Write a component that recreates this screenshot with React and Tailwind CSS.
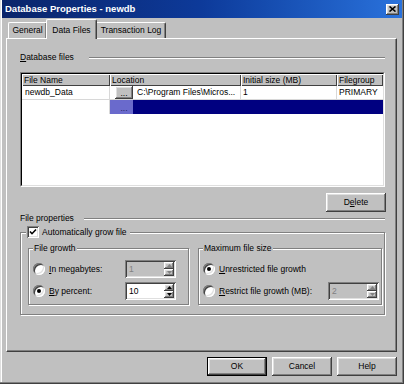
import React from 'react';

const raised =
  'bg-[#c0c0c0] shadow-[inset_-1px_-1px_0_#404040,inset_1px_1px_0_#fff,inset_-2px_-2px_0_#808080,inset_2px_2px_0_#dfdfdf]';
const sunken =
  'shadow-[inset_1px_1px_0_#808080,inset_-1px_-1px_0_#fff,inset_2px_2px_0_#404040,inset_-2px_-2px_0_#dfdfdf]';

function Radio({ checked }) {
  return (
    <span className="w-[12px] h-[12px] rounded-full bg-white shrink-0 flex items-center justify-center shadow-[inset_1px_1px_0_#808080,inset_-1px_-1px_0_#fff,inset_2px_2px_0_#404040,inset_-2px_-2px_0_#dfdfdf]">
      {checked && <span className="w-[4px] h-[4px] rounded-full bg-black" />}
    </span>
  );
}

function Spin({ value, disabled }) {
  return (
    <div className={`w-[51px] h-[18px] flex p-[2px] ${sunken} ${disabled ? 'bg-[#c0c0c0]' : 'bg-white'}`}>
      <div className={`flex-1 flex items-center pl-[2px] ${disabled ? 'text-[#808080]' : 'text-black'}`}>{value}</div>
      <div className="w-[10px] flex flex-col">
        <div className={`h-[7px] flex items-center justify-center ${raised}`}>
          <svg width="5" height="3" viewBox="0 0 5 3">
            <path d="M0 3 L2.5 0 L5 3 Z" fill={disabled ? '#808080' : '#000'} />
          </svg>
        </div>
        <div className={`flex-1 flex items-center justify-center ${raised}`}>
          <svg width="5" height="3" viewBox="0 0 5 3">
            <path d="M0 0 L2.5 3 L5 0 Z" fill={disabled ? '#808080' : '#000'} />
          </svg>
        </div>
      </div>
    </div>
  );
}

function Etched({ className = '' }) {
  return <div className={`flex-1 h-[2px] border-t border-t-[#808080] border-b border-b-white ${className}`} />;
}

export default function App() {
  return (
    <div className="w-[404px] h-[384px] bg-[#c0c0c0] text-black text-[8.5px] leading-none font-['Liberation_Sans',Arial,sans-serif] flex flex-col px-[2px] pb-[2px] overflow-hidden shadow-[inset_-1px_-1px_0_#404040,inset_-2px_-2px_0_#808080,inset_1px_0_0_#dfdfdf,inset_2px_0_0_#fff]">
      {/* title bar */}
      <div className="h-[18px] shrink-0 flex items-center justify-between pl-[3px] pr-[3px] bg-linear-to-r from-[#0a246a] via-[#0d3a9a] to-[#2a72dc]">
        <span className="text-white font-bold text-[9.5px]">Database Properties - newdb</span>
        <div className={`w-[13px] h-[11px] flex items-center justify-center ${raised}`}>
          <svg width="7" height="6" viewBox="0 0 7 6">
            <path d="M0.5 0.5 L6.5 5.5 M6.5 0.5 L0.5 5.5" stroke="#000" strokeWidth="1.6" />
          </svg>
        </div>
      </div>

      <div className="flex-1 flex flex-col pl-[4px] pr-[5px]">
        {/* tabs */}
        <div className="mt-[1px] h-[19px] flex items-end pl-[2px]">
          <div className="w-[38px] h-[16px] flex items-center justify-center border-l border-t border-white rounded-tl-[2px] shadow-[inset_-1px_0_0_#808080]">
            General
          </div>
          <div className="relative z-10 -mb-[1px] w-[51px] h-[20px] flex items-start pt-[6px] justify-center bg-[#c0c0c0] border-l border-t border-white border-r border-r-[#404040] rounded-t-[2px] shadow-[inset_-1px_0_0_#808080]">
            Data Files
          </div>
          <div className="w-[69px] h-[16px] flex items-center justify-center border-t border-white border-r border-r-[#404040] rounded-tr-[2px] shadow-[inset_-1px_0_0_#808080]">
            Transaction Log
          </div>
        </div>

        {/* tab panel */}
        <div className="h-[314px] shrink-0 flex flex-col pl-[13px] pr-[11px] border border-l-white border-t-white border-r-[#404040] border-b-[#404040] shadow-[inset_-1px_-1px_0_#808080]">
          <div className="mt-[12px] h-[13px] flex items-center">
            <span>
              <span className="underline">D</span>atabase files
            </span>
            <Etched className="ml-[15px]" />
          </div>

          {/* grid */}
          <div className="mt-[8px] h-[115px] border border-t-[#808080] border-l-[#808080] border-r-white border-b-white">
            <div className="h-full bg-white border border-t-black border-l-black border-r-[#dfdfdf] border-b-[#dfdfdf]">
              <div className="flex h-[12px]">
                <div className="w-[88px] flex items-center pl-[2px] bg-[#c0c0c0] shadow-[inset_1px_1px_0_#fff,inset_-1px_-1px_0_#404040]">File Name</div>
                <div className="w-[131px] flex items-center pl-[2px] bg-[#c0c0c0] shadow-[inset_1px_1px_0_#fff,inset_-1px_-1px_0_#404040]">Location</div>
                <div className="w-[96px] flex items-center pl-[2px] bg-[#c0c0c0] shadow-[inset_1px_1px_0_#fff,inset_-1px_-1px_0_#404040]">Initial size (MB)</div>
                <div className="flex-1 flex items-center pl-[2px] bg-[#c0c0c0] shadow-[inset_1px_1px_0_#fff,inset_-1px_-1px_0_#404040]">Filegroup</div>
              </div>
              <div className="flex h-[14px]">
                <div className="w-[88px] flex items-center pl-[3px] border-r border-b border-[#d8d8d8]">newdb_Data</div>
                <div className="w-[131px] flex items-center pl-[5px] border-r border-b border-[#d8d8d8]">
                  <span className={`w-[18px] h-[13px] flex items-end justify-center pb-[2px] ${raised}`}>...</span>
                  <span className="ml-[4px]">C:\Program Files\Micros...</span>
                </div>
                <div className="w-[96px] flex items-center pl-[2px] border-r border-b border-[#d8d8d8]">1</div>
                <div className="flex-1 flex items-center pl-[2px] border-b border-[#d8d8d8]">PRIMARY</div>
              </div>
              <div className="flex h-[14px]">
                <div className="w-[88px] border-r border-[#d8d8d8]" />
                <div className="flex-1 flex bg-[#000080]">
                  <span className="w-[23px] flex items-end justify-center pb-[2px] pl-[5px] bg-[#6a6acc] text-[#202060]">...</span>
                </div>
              </div>
            </div>
          </div>

          <div className="mt-[6px] h-[19px] flex justify-end -mr-[1px]">
            <button className={`w-[60px] h-[19px] flex items-center justify-center ${raised}`}>
              <span>
                D<span className="underline">e</span>lete
              </span>
            </button>
          </div>

          <div className="h-[13px] flex items-center">
            <span>File properties</span>
            <Etched className="ml-[10px]" />
          </div>

          {/* automatically grow file */}
          <fieldset className="mt-[1px] h-[89px] pl-[7px] border border-[#808080] shadow-[inset_1px_1px_0_#fff,1px_1px_0_#fff]">
            <legend className="bg-[#c0c0c0] pr-[3px] pl-[1px] -ml-[2px] h-[13px]">
              <span className="flex items-center gap-[3px]">
                <span className={`w-[12px] h-[12px] bg-white flex items-center justify-center ${sunken}`}>
                  <svg width="8" height="8" viewBox="0 0 8 8">
                    <path d="M1 3.5 L3 5.7 L7 1.5" stroke="#000" strokeWidth="1.6" fill="none" />
                  </svg>
                </span>
                <span>Automatically grow file</span>
              </span>
            </legend>
            <div className="mt-[3px] flex gap-[9px]">
              <fieldset className="w-[161px] h-[63px] pl-[4px] border border-[#808080] shadow-[inset_1px_1px_0_#fff,1px_1px_0_#fff]">
                <legend className="bg-[#c0c0c0] px-[1px] h-[13px] leading-[13px]">File growth</legend>
                <div className="mt-[5px] flex flex-col gap-[4px]">
                  <div className="h-[18px] flex items-center">
                    <div className="w-[92px] flex items-center gap-[4px]">
                      <Radio />
                      <span>
                        <span className="underline">I</span>n megabytes:
                      </span>
                    </div>
                    <Spin value="1" disabled />
                  </div>
                  <div className="h-[18px] flex items-center">
                    <div className="w-[92px] flex items-center gap-[4px]">
                      <Radio checked />
                      <span>
                        <span className="underline">B</span>y percent:
                      </span>
                    </div>
                    <Spin value="10" />
                  </div>
                </div>
              </fieldset>
              <fieldset className="w-[184px] h-[63px] pl-[4px] border border-[#808080] shadow-[inset_1px_1px_0_#fff,1px_1px_0_#fff]">
                <legend className="bg-[#c0c0c0] px-[1px] h-[13px] leading-[13px]">Maximum file size</legend>
                <div className="mt-[5px] flex flex-col gap-[4px]">
                  <div className="h-[18px] flex items-center">
                    <div className="w-[125px] flex items-center gap-[4px]">
                      <Radio checked />
                      <span>
                        <span className="underline">U</span>nrestricted file growth
                      </span>
                    </div>
                  </div>
                  <div className="h-[18px] flex items-center">
                    <div className="w-[125px] flex items-center gap-[4px]">
                      <Radio />
                      <span>
                        <span className="underline">R</span>estrict file growth (MB):
                      </span>
                    </div>
                    <Spin value="2" disabled />
                  </div>
                </div>
              </fieldset>
            </div>
          </fieldset>
        </div>

        {/* dialog buttons */}
        <div className="mt-[5px] h-[19px] flex justify-end gap-[5px]">
          <button className={`w-[60px] h-[19px] flex items-center justify-center border border-black ${raised}`}>OK</button>
          <button className={`w-[60px] h-[19px] flex items-center justify-center ${raised}`}>Cancel</button>
          <button className={`w-[60px] h-[19px] flex items-center justify-center ${raised}`}>Help</button>
        </div>
      </div>
    </div>
  );
}
